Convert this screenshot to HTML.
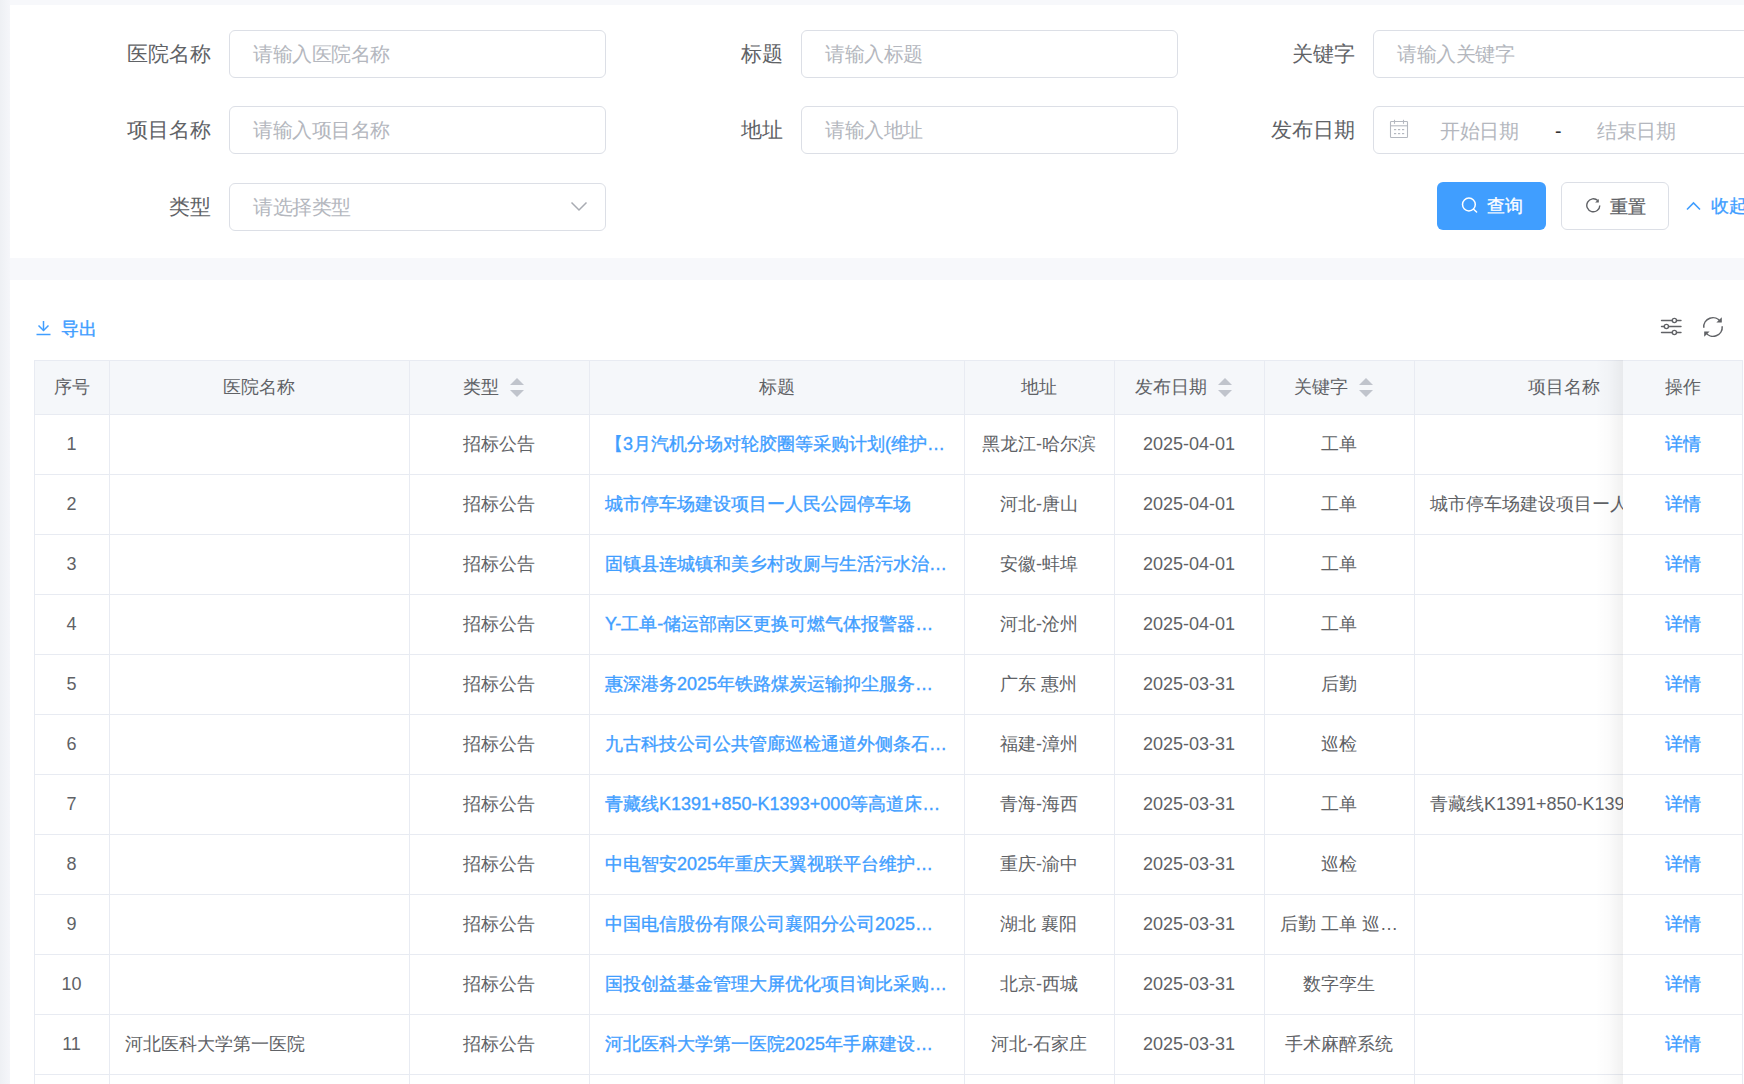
<!DOCTYPE html><html><head><meta charset="utf-8"><style>
*{box-sizing:border-box;margin:0;padding:0}
html,body{width:1744px;height:1084px;overflow:hidden}
body{background:#f7f8fb;font-family:"Liberation Sans",sans-serif;position:relative;color:#606266}
.edge{position:absolute;left:0;top:0;width:10px;height:1084px;background:linear-gradient(to right,#eef0f4,#f5f6fa)}
.panel{position:absolute;left:10px;background:#fff}
.p1{top:5px;width:1734px;height:253px}
.p2{top:280px;width:1734px;height:804px}
.lbl{position:absolute;font-size:21px;color:#606266;text-align:right;line-height:48px;height:48px;white-space:nowrap}
.inp{position:absolute;height:48px;border:1.5px solid #dcdfe6;border-radius:6px;background:#fff;font-size:19.5px;letter-spacing:-0.5px;color:#b4b7be;line-height:47px;padding-left:23px;white-space:nowrap}
.btn{position:absolute;height:48px;border-radius:6px;font-size:18px;line-height:48px;white-space:nowrap;-webkit-text-stroke:0.3px currentColor}
.abs{position:absolute}
.th,.td{position:absolute;font-size:18px;color:#606266;text-align:center;white-space:nowrap;overflow:hidden;text-overflow:ellipsis}
.vl{position:absolute;width:1px;background:#e8ebf2}
.hl{position:absolute;height:1px;background:#e8ebf2}
.lnk{color:#409eff;-webkit-text-stroke:0.35px #409eff}
.sortw{display:inline-block;width:36px;height:54px;vertical-align:top;position:relative}.sortw svg{position:absolute;left:11px;top:18px}
.shadow{position:absolute;left:1595px;top:360px;width:28px;height:724px;background:linear-gradient(to right,rgba(0,0,0,0) 0%,rgba(0,0,0,0.015) 50%,rgba(0,0,0,0.055) 100%)}
</style></head><body>
<div class="edge"></div>
<div class="panel p1"></div><div class="panel p2"></div>
<div class="lbl" style="right:1533px;top:30px">医院名称</div>
<div class="inp" style="left:229px;top:30px;width:377px">请输入医院名称</div>
<div class="lbl" style="right:961px;top:30px">标题</div>
<div class="inp" style="left:801px;top:30px;width:377px">请输入标题</div>
<div class="lbl" style="right:389px;top:30px">关键字</div>
<div class="inp" style="left:1373px;top:30px;width:400px">请输入关键字</div>
<div class="lbl" style="right:1533px;top:106px">项目名称</div>
<div class="inp" style="left:229px;top:106px;width:377px">请输入项目名称</div>
<div class="lbl" style="right:961px;top:106px">地址</div>
<div class="inp" style="left:801px;top:106px;width:377px">请输入地址</div>
<div class="lbl" style="right:389px;top:106px">发布日期</div>
<div class="inp" style="left:1373px;top:106px;width:400px;padding:0"><svg class="abs" style="left:15px;top:12px" width="20" height="20" viewBox="0 0 20 20"><g fill="none" stroke="#b4b8c0" stroke-width="1.1"><rect x="1.5" y="2.5" width="17" height="16" rx="0.8"/><line x1="1.5" y1="6.8" x2="18.5" y2="6.8"/><line x1="5.5" y1="0.8" x2="5.5" y2="4.8"/><line x1="14.5" y1="0.8" x2="14.5" y2="4.8"/></g><g fill="#b4b8c0"><rect x="5" y="10" width="2.2" height="1.2"/><rect x="9" y="10" width="2.2" height="1.2"/><rect x="13" y="10" width="2.2" height="1.2"/><rect x="5" y="14" width="2.2" height="1.2"/><rect x="9" y="14" width="2.2" height="1.2"/><rect x="13" y="14" width="2.2" height="1.2"/></g></svg><span class="abs" style="left:66px;top:1px">开始日期</span><span class="abs" style="left:181px;top:1px;color:#303133">-</span><span class="abs" style="left:223px;top:1px">结束日期</span></div>
<div class="lbl" style="right:1533px;top:183px">类型</div>
<div class="inp" style="left:229px;top:183px;width:377px"><svg class="abs" style="left:340px;top:15px" width="18" height="14" viewBox="0 0 18 14"><path d="M1.5 3.5 L9 11 L16.5 3.5" fill="none" stroke="#a8abb2" stroke-width="1.5"/></svg>请选择类型</div>
<div class="btn" style="left:1437px;top:182px;width:109px;background:#409eff;color:#fff"><svg class="abs" style="left:24px;top:15px" width="18" height="18" viewBox="0 0 18 18"><circle cx="7.9" cy="7.5" r="6.4" fill="none" stroke="#fff" stroke-width="1.5"/><line x1="12.6" y1="12.2" x2="15.6" y2="15" stroke="#fff" stroke-width="1.5" stroke-linecap="round"/></svg><span class="abs" style="left:50px">查询</span></div>
<div class="btn" style="left:1561px;top:182px;width:108px;border:1.5px solid #dcdfe6;background:#fff;color:#606266;line-height:45px"><svg class="abs" style="left:24px;top:15px" width="16" height="16" viewBox="0 0 16 16"><path d="M11.8 2.6 A6.5 6.5 0 1 0 13.8 7.4" fill="none" stroke="#606266" stroke-width="1.4"/><path d="M12.8 0.9 L12.8 4.6 L9.1 4.6 Z" fill="#606266"/></svg><span class="abs" style="left:48px;top:2px">重置</span></div>
<svg class="abs" style="left:1686px;top:200px" width="15" height="12" viewBox="0 0 15 12"><path d="M1 9.5 L7.5 3 L14 9.5" fill="none" stroke="#409eff" stroke-width="1.6"/></svg>
<div class="abs" style="left:1711px;top:182px;line-height:48px;font-size:18px;color:#409eff;-webkit-text-stroke:0.3px #409eff;white-space:nowrap">收起</div>
<svg class="abs" style="left:36px;top:320px" width="16" height="16" viewBox="0 0 16 16"><g fill="none" stroke="#409eff" stroke-width="1.5"><line x1="7.5" y1="1" x2="7.5" y2="10.5"/><path d="M2.5 5.5 L7.5 10.5 L12.5 5.5"/><line x1="0.5" y1="14.5" x2="14.5" y2="14.5"/></g></svg>
<div class="abs" style="left:61px;top:315px;line-height:28px;font-size:18px;color:#409eff;-webkit-text-stroke:0.4px #409eff">导出</div>
<svg class="abs" style="left:1660px;top:316px" width="24" height="22" viewBox="0 0 24 22"><g fill="none" stroke="#606266" stroke-width="1.4" stroke-linecap="round"><line x1="1.5" y1="4.5" x2="12.2" y2="4.5"/><line x1="16.6" y1="4.5" x2="21" y2="4.5"/><circle cx="14.4" cy="4.5" r="2.1"/><line x1="1.5" y1="10.5" x2="4.2" y2="10.5"/><line x1="8.6" y1="10.5" x2="21" y2="10.5"/><circle cx="6.4" cy="10.5" r="2.1"/><line x1="1.5" y1="16.5" x2="12.2" y2="16.5"/><line x1="16.6" y1="16.5" x2="21" y2="16.5"/><circle cx="14.4" cy="16.5" r="2.1"/></g></svg>
<svg class="abs" style="left:1701px;top:315px" width="24" height="24" viewBox="0 0 24 24"><g fill="none" stroke="#606266" stroke-width="1.5"><path d="M2.8 12.8 A9.2 9.2 0 0 1 19.6 6.8"/><path d="M21.2 11.2 A9.2 9.2 0 0 1 4.4 17.2"/></g><path d="M20.8 2.2 L20.8 7.6 L15.4 7.6 Z" fill="#606266"/><path d="M3.2 21.8 L3.2 16.4 L8.6 16.4 Z" fill="#606266"/></svg>
<div class="abs" style="left:34px;top:360px;width:1709px;height:54px;background:#f5f7fa"></div><div class="th" style="left:34px;top:360px;width:75px;height:54px;line-height:54px">序号</div><div class="th" style="left:109px;top:360px;width:300px;height:54px;line-height:54px">医院名称</div><div class="th" style="left:409px;top:360px;width:180px;height:54px;line-height:54px">类型<span class="sortw"><svg width="14" height="20" viewBox="0 0 14 20"><path d="M7 0 L14 7 L0 7 Z" fill="#c0c4cc"/><path d="M0 12 L14 12 L7 19 Z" fill="#c0c4cc"/></svg></span></div><div class="th" style="left:589px;top:360px;width:375px;height:54px;line-height:54px">标题</div><div class="th" style="left:964px;top:360px;width:150px;height:54px;line-height:54px">地址</div><div class="th" style="left:1114px;top:360px;width:150px;height:54px;line-height:54px">发布日期<span class="sortw"><svg width="14" height="20" viewBox="0 0 14 20"><path d="M7 0 L14 7 L0 7 Z" fill="#c0c4cc"/><path d="M0 12 L14 12 L7 19 Z" fill="#c0c4cc"/></svg></span></div><div class="th" style="left:1264px;top:360px;width:150px;height:54px;line-height:54px">关键字<span class="sortw"><svg width="14" height="20" viewBox="0 0 14 20"><path d="M7 0 L14 7 L0 7 Z" fill="#c0c4cc"/><path d="M0 12 L14 12 L7 19 Z" fill="#c0c4cc"/></svg></span></div><div class="th" style="left:1414px;top:360px;width:300px;height:54px;line-height:54px">项目名称</div><div class="td" style="left:34px;top:414px;width:75px;height:60px;line-height:60px">1</div><div class="td" style="left:409px;top:414px;width:180px;height:60px;line-height:60px">招标公告</div><div class="td lnk" style="left:589px;top:414px;width:375px;height:60px;line-height:60px;text-align:left;padding-left:16px;padding-right:16px">【3月汽机分场对轮胶圈等采购计划(维护…</div><div class="td" style="left:964px;top:414px;width:150px;height:60px;line-height:60px">黑龙江-哈尔滨</div><div class="td" style="left:1114px;top:414px;width:150px;height:60px;line-height:60px">2025-04-01</div><div class="td" style="left:1264px;top:414px;width:150px;height:60px;line-height:60px">工单</div><div class="td" style="left:34px;top:474px;width:75px;height:60px;line-height:60px">2</div><div class="td" style="left:409px;top:474px;width:180px;height:60px;line-height:60px">招标公告</div><div class="td lnk" style="left:589px;top:474px;width:375px;height:60px;line-height:60px;text-align:left;padding-left:16px;padding-right:16px">城市停车场建设项目ー人民公园停车场</div><div class="td" style="left:964px;top:474px;width:150px;height:60px;line-height:60px">河北-唐山</div><div class="td" style="left:1114px;top:474px;width:150px;height:60px;line-height:60px">2025-04-01</div><div class="td" style="left:1264px;top:474px;width:150px;height:60px;line-height:60px">工单</div><div class="td" style="left:1414px;top:474px;width:209px;height:60px;line-height:60px;text-align:left;padding-left:16px;padding-right:16px;text-overflow:clip;padding-right:0">城市停车场建设项目ー人民公园停车场</div><div class="td" style="left:34px;top:534px;width:75px;height:60px;line-height:60px">3</div><div class="td" style="left:409px;top:534px;width:180px;height:60px;line-height:60px">招标公告</div><div class="td lnk" style="left:589px;top:534px;width:375px;height:60px;line-height:60px;text-align:left;padding-left:16px;padding-right:16px">固镇县连城镇和美乡村改厕与生活污水治…</div><div class="td" style="left:964px;top:534px;width:150px;height:60px;line-height:60px">安徽-蚌埠</div><div class="td" style="left:1114px;top:534px;width:150px;height:60px;line-height:60px">2025-04-01</div><div class="td" style="left:1264px;top:534px;width:150px;height:60px;line-height:60px">工单</div><div class="td" style="left:34px;top:594px;width:75px;height:60px;line-height:60px">4</div><div class="td" style="left:409px;top:594px;width:180px;height:60px;line-height:60px">招标公告</div><div class="td lnk" style="left:589px;top:594px;width:375px;height:60px;line-height:60px;text-align:left;padding-left:16px;padding-right:16px">Y-工单-储运部南区更换可燃气体报警器…</div><div class="td" style="left:964px;top:594px;width:150px;height:60px;line-height:60px">河北-沧州</div><div class="td" style="left:1114px;top:594px;width:150px;height:60px;line-height:60px">2025-04-01</div><div class="td" style="left:1264px;top:594px;width:150px;height:60px;line-height:60px">工单</div><div class="td" style="left:34px;top:654px;width:75px;height:60px;line-height:60px">5</div><div class="td" style="left:409px;top:654px;width:180px;height:60px;line-height:60px">招标公告</div><div class="td lnk" style="left:589px;top:654px;width:375px;height:60px;line-height:60px;text-align:left;padding-left:16px;padding-right:16px">惠深港务2025年铁路煤炭运输抑尘服务…</div><div class="td" style="left:964px;top:654px;width:150px;height:60px;line-height:60px">广东 惠州</div><div class="td" style="left:1114px;top:654px;width:150px;height:60px;line-height:60px">2025-03-31</div><div class="td" style="left:1264px;top:654px;width:150px;height:60px;line-height:60px">后勤</div><div class="td" style="left:34px;top:714px;width:75px;height:60px;line-height:60px">6</div><div class="td" style="left:409px;top:714px;width:180px;height:60px;line-height:60px">招标公告</div><div class="td lnk" style="left:589px;top:714px;width:375px;height:60px;line-height:60px;text-align:left;padding-left:16px;padding-right:16px">九古科技公司公共管廊巡检通道外侧条石…</div><div class="td" style="left:964px;top:714px;width:150px;height:60px;line-height:60px">福建-漳州</div><div class="td" style="left:1114px;top:714px;width:150px;height:60px;line-height:60px">2025-03-31</div><div class="td" style="left:1264px;top:714px;width:150px;height:60px;line-height:60px">巡检</div><div class="td" style="left:34px;top:774px;width:75px;height:60px;line-height:60px">7</div><div class="td" style="left:409px;top:774px;width:180px;height:60px;line-height:60px">招标公告</div><div class="td lnk" style="left:589px;top:774px;width:375px;height:60px;line-height:60px;text-align:left;padding-left:16px;padding-right:16px">青藏线K1391+850-K1393+000等高道床…</div><div class="td" style="left:964px;top:774px;width:150px;height:60px;line-height:60px">青海-海西</div><div class="td" style="left:1114px;top:774px;width:150px;height:60px;line-height:60px">2025-03-31</div><div class="td" style="left:1264px;top:774px;width:150px;height:60px;line-height:60px">工单</div><div class="td" style="left:1414px;top:774px;width:209px;height:60px;line-height:60px;text-align:left;padding-left:16px;padding-right:16px;text-overflow:clip;padding-right:0">青藏线K1391+850-K1393+000等高道床</div><div class="td" style="left:34px;top:834px;width:75px;height:60px;line-height:60px">8</div><div class="td" style="left:409px;top:834px;width:180px;height:60px;line-height:60px">招标公告</div><div class="td lnk" style="left:589px;top:834px;width:375px;height:60px;line-height:60px;text-align:left;padding-left:16px;padding-right:16px">中电智安2025年重庆天翼视联平台维护…</div><div class="td" style="left:964px;top:834px;width:150px;height:60px;line-height:60px">重庆-渝中</div><div class="td" style="left:1114px;top:834px;width:150px;height:60px;line-height:60px">2025-03-31</div><div class="td" style="left:1264px;top:834px;width:150px;height:60px;line-height:60px">巡检</div><div class="td" style="left:34px;top:894px;width:75px;height:60px;line-height:60px">9</div><div class="td" style="left:409px;top:894px;width:180px;height:60px;line-height:60px">招标公告</div><div class="td lnk" style="left:589px;top:894px;width:375px;height:60px;line-height:60px;text-align:left;padding-left:16px;padding-right:16px">中国电信股份有限公司襄阳分公司2025…</div><div class="td" style="left:964px;top:894px;width:150px;height:60px;line-height:60px">湖北 襄阳</div><div class="td" style="left:1114px;top:894px;width:150px;height:60px;line-height:60px">2025-03-31</div><div class="td" style="left:1264px;top:894px;width:150px;height:60px;line-height:60px">后勤 工单 巡…</div><div class="td" style="left:34px;top:954px;width:75px;height:60px;line-height:60px">10</div><div class="td" style="left:409px;top:954px;width:180px;height:60px;line-height:60px">招标公告</div><div class="td lnk" style="left:589px;top:954px;width:375px;height:60px;line-height:60px;text-align:left;padding-left:16px;padding-right:16px">国投创益基金管理大屏优化项目询比采购…</div><div class="td" style="left:964px;top:954px;width:150px;height:60px;line-height:60px">北京-西城</div><div class="td" style="left:1114px;top:954px;width:150px;height:60px;line-height:60px">2025-03-31</div><div class="td" style="left:1264px;top:954px;width:150px;height:60px;line-height:60px">数字孪生</div><div class="td" style="left:34px;top:1014px;width:75px;height:60px;line-height:60px">11</div><div class="td" style="left:109px;top:1014px;width:300px;height:60px;line-height:60px;text-align:left;padding-left:16px;padding-right:16px">河北医科大学第一医院</div><div class="td" style="left:409px;top:1014px;width:180px;height:60px;line-height:60px">招标公告</div><div class="td lnk" style="left:589px;top:1014px;width:375px;height:60px;line-height:60px;text-align:left;padding-left:16px;padding-right:16px">河北医科大学第一医院2025年手麻建设…</div><div class="td" style="left:964px;top:1014px;width:150px;height:60px;line-height:60px">河北-石家庄</div><div class="td" style="left:1114px;top:1014px;width:150px;height:60px;line-height:60px">2025-03-31</div><div class="td" style="left:1264px;top:1014px;width:150px;height:60px;line-height:60px">手术麻醉系统</div><div class="td" style="left:34px;top:1074px;width:75px;height:60px;line-height:60px">12</div><div class="td" style="left:409px;top:1074px;width:180px;height:60px;line-height:60px">招标公告</div><div class="vl" style="left:34px;top:360px;height:724px"></div><div class="vl" style="left:109px;top:360px;height:724px"></div><div class="vl" style="left:409px;top:360px;height:724px"></div><div class="vl" style="left:589px;top:360px;height:724px"></div><div class="vl" style="left:964px;top:360px;height:724px"></div><div class="vl" style="left:1114px;top:360px;height:724px"></div><div class="vl" style="left:1264px;top:360px;height:724px"></div><div class="vl" style="left:1414px;top:360px;height:724px"></div><div class="hl" style="left:34px;top:360px;width:1709px"></div><div class="hl" style="left:34px;top:414px;width:1709px"></div><div class="hl" style="left:34px;top:474px;width:1709px"></div><div class="hl" style="left:34px;top:534px;width:1709px"></div><div class="hl" style="left:34px;top:594px;width:1709px"></div><div class="hl" style="left:34px;top:654px;width:1709px"></div><div class="hl" style="left:34px;top:714px;width:1709px"></div><div class="hl" style="left:34px;top:774px;width:1709px"></div><div class="hl" style="left:34px;top:834px;width:1709px"></div><div class="hl" style="left:34px;top:894px;width:1709px"></div><div class="hl" style="left:34px;top:954px;width:1709px"></div><div class="hl" style="left:34px;top:1014px;width:1709px"></div><div class="hl" style="left:34px;top:1074px;width:1709px"></div><div class="hl" style="left:34px;top:1134px;width:1709px"></div>
<div class="shadow"></div>
<div class="abs" style="left:1623px;top:360px;width:120px;height:724px;background:#fff"></div><div class="abs" style="left:1623px;top:360px;width:120px;height:54px;background:#f5f7fa"></div><div class="th" style="left:1623px;top:360px;width:119px;height:54px;line-height:54px">操作</div><div class="td lnk" style="left:1623px;top:414px;width:119px;height:60px;line-height:60px">详情</div><div class="td lnk" style="left:1623px;top:474px;width:119px;height:60px;line-height:60px">详情</div><div class="td lnk" style="left:1623px;top:534px;width:119px;height:60px;line-height:60px">详情</div><div class="td lnk" style="left:1623px;top:594px;width:119px;height:60px;line-height:60px">详情</div><div class="td lnk" style="left:1623px;top:654px;width:119px;height:60px;line-height:60px">详情</div><div class="td lnk" style="left:1623px;top:714px;width:119px;height:60px;line-height:60px">详情</div><div class="td lnk" style="left:1623px;top:774px;width:119px;height:60px;line-height:60px">详情</div><div class="td lnk" style="left:1623px;top:834px;width:119px;height:60px;line-height:60px">详情</div><div class="td lnk" style="left:1623px;top:894px;width:119px;height:60px;line-height:60px">详情</div><div class="td lnk" style="left:1623px;top:954px;width:119px;height:60px;line-height:60px">详情</div><div class="td lnk" style="left:1623px;top:1014px;width:119px;height:60px;line-height:60px">详情</div><div class="td lnk" style="left:1623px;top:1074px;width:119px;height:60px;line-height:60px">详情</div><div class="vl" style="left:1742px;top:360px;height:724px"></div><div class="hl" style="left:1623px;top:360px;width:120px"></div><div class="hl" style="left:1623px;top:414px;width:120px"></div><div class="hl" style="left:1623px;top:474px;width:120px"></div><div class="hl" style="left:1623px;top:534px;width:120px"></div><div class="hl" style="left:1623px;top:594px;width:120px"></div><div class="hl" style="left:1623px;top:654px;width:120px"></div><div class="hl" style="left:1623px;top:714px;width:120px"></div><div class="hl" style="left:1623px;top:774px;width:120px"></div><div class="hl" style="left:1623px;top:834px;width:120px"></div><div class="hl" style="left:1623px;top:894px;width:120px"></div><div class="hl" style="left:1623px;top:954px;width:120px"></div><div class="hl" style="left:1623px;top:1014px;width:120px"></div><div class="hl" style="left:1623px;top:1074px;width:120px"></div><div class="hl" style="left:1623px;top:1134px;width:120px"></div>
</body></html>
